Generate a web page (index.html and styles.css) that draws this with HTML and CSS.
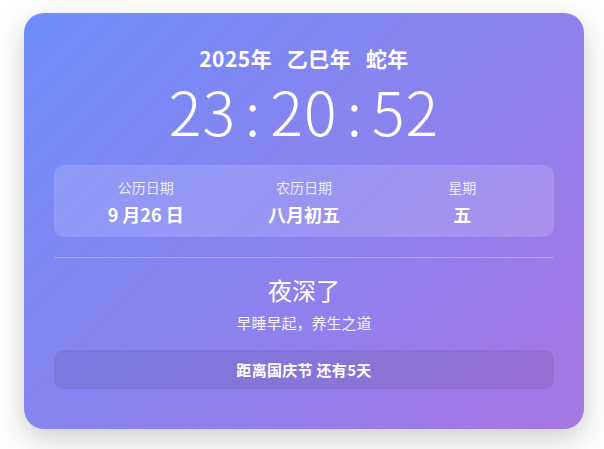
FILE: index.html
```html
<!DOCTYPE html>
<html lang="zh">
<head>
<meta charset="utf-8">
<link rel="stylesheet" href="styles.css">
</head>
<body>
<div class="card">
  <div class="year">2025年&nbsp; 乙巳年&nbsp; 蛇年</div>
  <div class="clock"><span>23</span><span class="colon">:</span><span>20</span><span class="colon">:</span><span>52</span></div>
  <div class="info">
    <div class="col"><div class="label">公历日期</div><div class="value">9 月26 日</div></div>
    <div class="col"><div class="label">农历日期</div><div class="value">八月初五</div></div>
    <div class="col"><div class="label">星期</div><div class="value">五</div></div>
  </div>
  <div class="divider"></div>
  <div class="greet">夜深了</div>
  <div class="tip">早睡早起，养生之道</div>
  <div class="countdown">距离国庆节 还有5天</div>
</div>
</body>
</html>
```
FILE: styles.css
```css
html, body { margin: 0; padding: 0; background: #fff; }
body { font-family: "Noto Sans CJK SC", "Noto Sans", sans-serif; color: #fff; padding: 13px 0 40px 24px; }
.card {
  width: 560px; height: 416px; box-sizing: border-box;
  border-radius: 20px;
  background: linear-gradient(135deg, #6e8efb, #a777e3);
  box-shadow: 0 10px 30px rgba(0,0,0,0.2);
  padding: 30px 30px;
  display: flex; flex-direction: column; align-items: stretch;
}
.year { text-align: center; font-size: 21px; font-weight: 700; line-height: 30px; letter-spacing: 0.5px; word-spacing: 2px; }
.clock { text-align: center; font-size: 61px; font-weight: 200; line-height: 70px; margin-top: 2px; letter-spacing: 1px; }
.colon { margin: 0 9px; }
.info {
  margin-top: 20px; background: rgba(255,255,255,0.15); border-radius: 10px;
  display: grid; grid-template-columns: 1fr 1fr 1fr; gap: 15px; padding: 12px 20px 10px;
  text-align: center;
}
.label { font-size: 14px; line-height: 20px; opacity: 0.8; }
.value { font-size: 18px; font-weight: 700; line-height: 26px; margin-top: 4px; }
.divider { height: 1px; background: rgba(255,255,255,0.25); margin-top: 20px; }
.greet { text-align: center; font-size: 24px; line-height: 32px; margin-top: 16px; }
.tip { text-align: center; font-size: 15px; line-height: 20px; opacity: 0.9; margin-top: 7px; }
.countdown {
  margin-top: 17px; background: rgba(0,0,0,0.08); border-radius: 10px;
  text-align: center; font-size: 15px; font-weight: 700; line-height: 39px; letter-spacing: 0.3px;
}
```
